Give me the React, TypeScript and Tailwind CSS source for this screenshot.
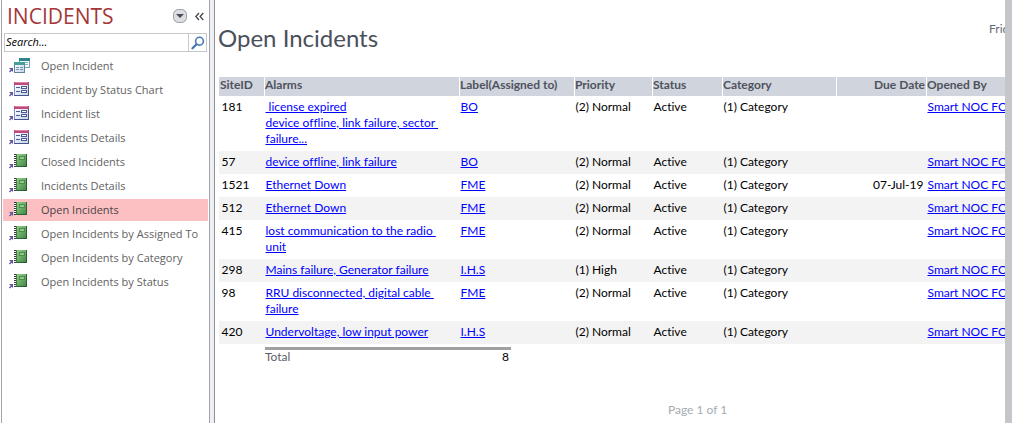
import React from "react";

type IconKind = "query" | "form" | "report";

const navItems: { label: string; icon: IconKind; selected?: boolean }[] = [
  { label: "Open Incident", icon: "query" },
  { label: "incident by Status Chart", icon: "form" },
  { label: "Incident list", icon: "form" },
  { label: "Incidents Details", icon: "form" },
  { label: "Closed Incidents", icon: "report" },
  { label: "Incidents Details", icon: "report" },
  { label: "Open Incidents", icon: "report", selected: true },
  { label: "Open Incidents by Assigned To", icon: "report" },
  { label: "Open Incidents by Category", icon: "report" },
  { label: "Open Incidents by Status", icon: "report" },
];

const incidents = [
  { id: "181", alarms: ["\u00a0license expired", "device offline, link failure, sector\u00a0", "failure..."], label: "BO", priority: "(2) Normal", due: "" },
  { id: "57", alarms: ["device offline, link failure"], label: "BO", priority: "(2) Normal", due: "" },
  { id: "1521", alarms: ["Ethernet Down"], label: "FME", priority: "(2) Normal", due: "07-Jul-19" },
  { id: "512", alarms: ["Ethernet Down"], label: "FME", priority: "(2) Normal", due: "" },
  { id: "415", alarms: ["lost communication to the radio\u00a0", "unit"], label: "FME", priority: "(2) Normal", due: "" },
  { id: "298", alarms: ["Mains failure, Generator failure"], label: "I.H.S", priority: "(1) High", due: "" },
  { id: "98", alarms: ["RRU disconnected, digital cable\u00a0", "failure"], label: "FME", priority: "(2) Normal", due: "" },
  { id: "420", alarms: ["Undervoltage, low input power"], label: "I.H.S", priority: "(2) Normal", due: "" },
];

function ShortcutArrow() {
  return <path d="M0 11h4v4l-1.300-1.300L1 15.400L0 14.400L1.700 12.700z" fill="#5d57a6" />;
}

function NavIcon({ kind }: { kind: IconKind }) {
  return (
    <svg width="22" height="18" viewBox="0 0 22 18" className="shrink-0" aria-hidden="true">
      <defs>
        <linearGradient id="book" x1="0" y1="0" x2="1" y2="1">
          <stop offset="0" stopColor="#9fd08f" />
          <stop offset="0.5" stopColor="#6aae66" />
          <stop offset="1" stopColor="#3b8044" />
        </linearGradient>
        <linearGradient id="page" x1="0" y1="0" x2="1" y2="1">
          <stop offset="0" stopColor="#ffffff" />
          <stop offset="1" stopColor="#c5d2ee" />
        </linearGradient>
      </defs>
      <ShortcutArrow />
      {kind === "query" && (
        <g>
          <rect x="10.5" y="1.5" width="10" height="9" fill="#f5fafb" stroke="#7ba0b0" />
          <rect x="10" y="1" width="11" height="3" fill="#2f8585" />
          <path d="M12 5.500h3M16 5.500h3M16 7.500h3" stroke="#8fb0c0" />
          <rect x="5.5" y="5.5" width="10" height="10" fill="url(#page)" stroke="#5d859b" />
          <rect x="5" y="5" width="11" height="3" fill="#46a09a" />
          <path d="M7 10.500h3M11 10.500h3M7 12.500h3M11 12.500h3" stroke="#6f93aa" />
        </g>
      )}
      {kind === "form" && (
        <g>
          <rect x="5.5" y="1.5" width="14" height="13" fill="url(#page)" stroke="#8394c2" />
          <path d="M19.500 4v11M5 14.500h15" stroke="#44568c" />
          <rect x="5" y="1" width="15" height="3" fill="#c14a7c" />
          <path d="M6 1.500h13" stroke="#dc82a8" />
          <path d="M7 6.500h4M7 10.500h4" stroke="#4a5a90" />
          <rect x="12.5" y="5.5" width="5" height="2" fill="#fff" stroke="#4a5a90" />
          <rect x="12.5" y="9.5" width="5" height="2" fill="#fff" stroke="#4a5a90" />
        </g>
      )}
      {kind === "report" && (
        <g>
          <rect x="6" y="1" width="12" height="13" fill="url(#book)" />
          <path d="M17.500 1v13M7 13.500h11" stroke="#2b5c34" />
          <path d="M6 1v13" stroke="#fff" strokeWidth="2" />
          <path d="M7.500 1v13" stroke="#3f7c46" />
          <path d="M5 1.500h2M5 3.500h2M5 5.500h2M5 7.500h2M5 9.500h2M5 11.500h2M5 13.500h2" stroke="#353535" />
          <rect x="10.5" y="3.5" width="5" height="3" fill="#92c786" stroke="#4b8c50" />
        </g>
      )}
    </svg>
  );
}

function Sidebar() {
  return (
    <aside className="ml-px flex w-[209px] shrink-0 flex-col border-x border-[#a2a5ad] bg-white font-['Open_Sans',sans-serif]">
      <header className="flex h-8 items-center px-[5px]">
        <h1 className="flex-1 text-[21px] leading-8 text-[#a4373a]">INCIDENTS</h1>
        <button type="button" aria-label="Choose category" className="mr-2">
          <svg width="14" height="14" viewBox="0 0 14 14">
            <rect x="0.5" y="0.5" width="13" height="13" rx="5" fill="#dcdee2" stroke="#989ba3" />
            <path d="M3 5h8L7 9z" fill="#4c4d58" />
          </svg>
        </button>
        <button type="button" aria-label="Collapse pane">
          <svg width="9" height="9" viewBox="0 0 9 9" fill="none" stroke="#44464f" strokeWidth="1.3">
            <path d="M4 1L0.800 4.500L4 8M8.300 1L5.100 4.500L8.300 8" />
          </svg>
        </button>
      </header>
      <form className="mx-0.5 mt-px flex h-[19px] border border-[#c6c8cc]">
        <input
          type="text"
          aria-label="Search"
          placeholder="Search..."
          className="min-w-0 flex-1 pl-px text-[11px] italic text-black outline-none placeholder:text-black"
        />
        <button type="button" aria-label="Search" className="flex w-[18px] items-center justify-center border-l border-[#c6c8cc]">
          <svg width="14" height="14" viewBox="0 0 14 14" fill="none">
            <circle cx="8.5" cy="5.2" r="3.9" stroke="#4478b4" strokeWidth="1.6" />
            <path d="M5.500 8.300L1.500 12.300" stroke="#3f74b1" strokeWidth="2.2" strokeLinecap="round" />
          </svg>
        </button>
      </form>
      <nav className="mt-[3px] flex flex-col gap-0.5 px-px">
        {navItems.map((item, i) => (
          <a
            key={i}
            href="#"
            className={
              item.selected
                ? "flex h-[22px] items-center gap-2.5 bg-[#fcc0c2] pl-1.5 text-[11px] text-[#4a4347]"
                : "flex h-[22px] items-center gap-2.5 pl-1.5 text-[11px] text-[#626262]"
            }
          >
            <NavIcon kind={item.icon} />
            <span className="whitespace-nowrap">{item.label}</span>
          </a>
        ))}
      </nav>
    </aside>
  );
}

const headCell = "border-l border-white bg-[#d0d4dd] p-0 pb-[3px] font-bold";
const bodyCell = "pt-[3px] pb-1 pl-px whitespace-nowrap";

function ReportTable() {
  return (
    <table className="w-full table-fixed border-collapse text-left text-[12px] leading-4 text-black">
      <colgroup>
        <col className="w-[46px]" />
        <col className="w-[195px]" />
        <col className="w-[115px]" />
        <col className="w-[78px]" />
        <col className="w-[70px]" />
        <col className="w-[114px]" />
        <col className="w-[90px]" />
        <col />
      </colgroup>
      <thead>
        <tr className="text-[#4f525c]">
          <th className="border-l border-white bg-[#d0d4dd] p-0 pb-[3px] pl-px font-bold">SiteID</th>
          <th className={headCell}>Alarms</th>
          <th className={headCell}>Label(Assigned to)</th>
          <th className={headCell}>Priority</th>
          <th className={headCell}>Status</th>
          <th className={headCell}>Category</th>
          <th className="border-l border-white bg-[#d0d4dd] p-0 pb-[3px] pr-px text-right font-bold">Due Date</th>
          <th className={headCell}>Opened By</th>
        </tr>
      </thead>
      <tbody>
        {incidents.map((row) => (
          <tr key={row.id} className="align-top even:bg-[#f3f3f3]">
            <td className="pb-1 pl-[3px] pt-[3px]">{row.id}</td>
            <td className={bodyCell}>
              <a href="#" className="text-[#0000ff] underline">
                {row.alarms.map((line, i) => (
                  <span key={i} className="block">{line}</span>
                ))}
              </a>
            </td>
            <td className={bodyCell}>
              <a href="#" className="text-[#0000ff] underline">{row.label}</a>
            </td>
            <td className={bodyCell}>{row.priority}</td>
            <td className={bodyCell}>Active</td>
            <td className={bodyCell}>(1) Category</td>
            <td className="pb-1 pr-[3px] pt-[3px] text-right">{row.due}</td>
            <td className="overflow-hidden whitespace-nowrap pb-1 pl-px pt-[3px]">
              <a href="#" className="text-[#0000ff] underline">Smart NOC FO</a>
            </td>
          </tr>
        ))}
      </tbody>
    </table>
  );
}

export default function App() {
  return (
    <div className="flex min-h-screen bg-white">
      <Sidebar />
      <div className="w-[5px] shrink-0 border-r border-[#8d9097] bg-[#eeeff3]" />
      <main className="min-w-0 flex-1 overflow-hidden pl-[3px] font-['Lato',sans-serif] [font-variant-ligatures:none]">
        <div className="flex h-[77px] items-start justify-between">
          <h2 className="pt-[22px] text-[24px] leading-8 text-[#4a505c]">Open Incidents</h2>
          <p className="w-4 overflow-hidden pt-[21px] text-[12px] leading-4 text-[#666b75]">Frid</p>
        </div>
        <ReportTable />
        <div className="ml-[47px] mt-[3px] flex w-[246px] justify-between border-t-[3px] border-[#a0a0a0] text-[12px] leading-[14px]">
          <span className="text-[#5b5e66]">Total</span>
          <span className="pr-0.5">8</span>
        </div>
        <p className="ml-[450px] mt-[38px] text-[12px] leading-4 text-[#a6abb2]">Page 1 of 1</p>
      </main>
      <div className="w-[7px] shrink-0 bg-[#c5c6ca]" />
    </div>
  );
}
